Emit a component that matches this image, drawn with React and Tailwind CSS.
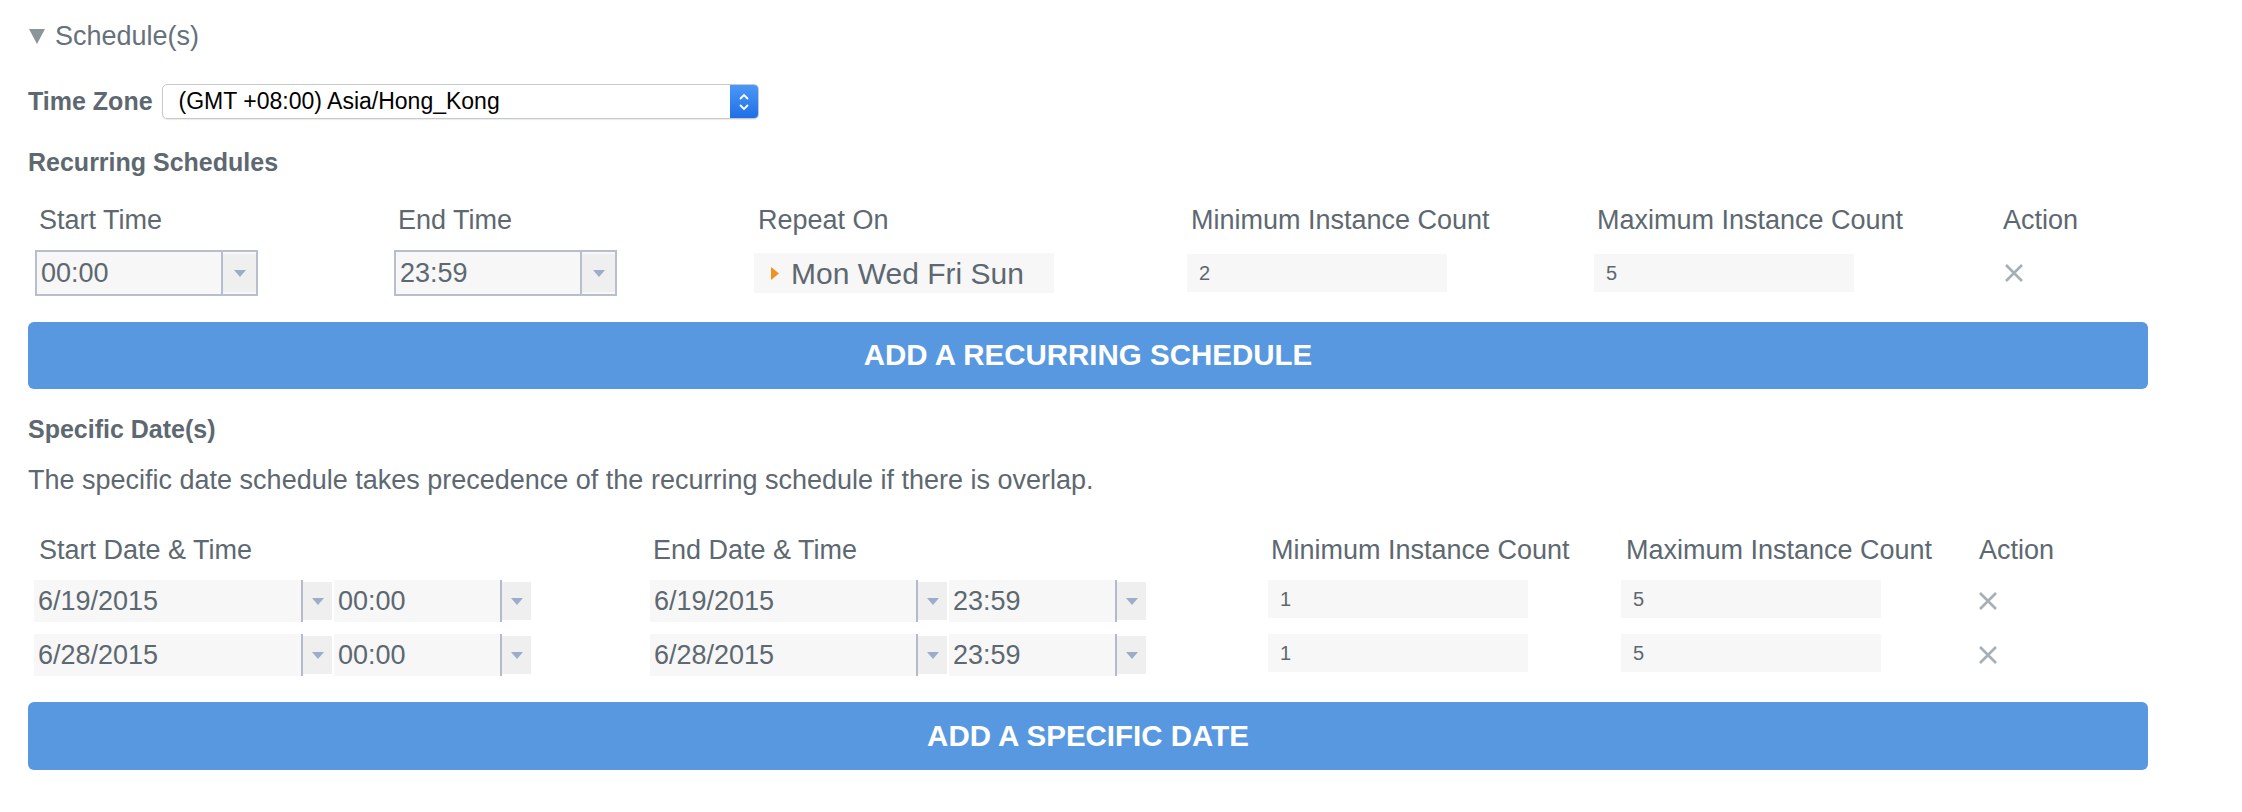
import React from "react";

const DownTri = () => (
  <svg width="12" height="7" viewBox="0 0 12 7">
    <path d="M0 0h12L6 7z" fill="#9cadc9" />
  </svg>
);

const XIcon = () => (
  <svg width="20" height="20" viewBox="0 0 20 20">
    <path d="M2 2l16 16M18 2L2 18" stroke="#a7afb6" strokeWidth="2.6" />
  </svg>
);

// bordered time select used in the recurring row
const TimeSelect = ({ value }) => (
  <div className="flex h-[46px] w-[223px] border-2 border-[#b7bfcf] bg-[#f7f7f7]">
    <div className="flex flex-1 items-center pl-[4px] text-[27px] text-[#5d6870]">{value}</div>
    <div className="w-[2px] bg-[#b7bfcf]" />
    <div className="mt-[2px] mb-[2px] flex w-[33px] items-center justify-center bg-[#efefef]">
      <DownTri />
    </div>
  </div>
);

// borderless field + dropdown used in the specific date rows
const Field = ({ value, width }) => (
  <div className="flex h-[42px]">
    <div className={`flex items-center bg-[#f7f7f7] pl-[4px] text-[27px] text-[#5d6870] ${width}`}>{value}</div>
    <div className="w-[2px] bg-[#b3bbcb]" />
    <div className="my-[2px] flex w-[29px] items-center justify-center bg-[#efefef]">
      <DownTri />
    </div>
  </div>
);

const NumBox = ({ value, width }) => (
  <div className={`flex h-[38px] items-center bg-[#f7f7f7] pl-[12px] text-[20px] text-[#5d6870] ${width}`}>
    {value}
  </div>
);

const specificRows = [
  { sd: "6/19/2015", st: "00:00", ed: "6/19/2015", et: "23:59", min: "1", max: "5" },
  { sd: "6/28/2015", st: "00:00", ed: "6/28/2015", et: "23:59", min: "1", max: "5" },
];

export default function App() {
  return (
    <div className="h-[812px] w-full bg-white font-['Liberation_Sans',Arial,sans-serif] text-[#5d6870]">
      <div className="pl-[28px] pr-[94px]">
        {/* section title */}
        <div className="flex h-[72px] items-center">
          <svg width="16" height="15" viewBox="0 0 16 15" className="ml-[1px]">
            <path d="M0 0h16L8 15z" fill="#8b959c" />
          </svg>
          <span className="ml-[10px] text-[27px] text-[#66717a]">Schedule(s)</span>
        </div>

        {/* time zone */}
        <div className="mt-[12px] flex h-[35px] items-center">
          <span className="text-[25px] font-bold">Time Zone</span>
          <div className="ml-[9px] flex h-[35px] w-[597px] overflow-hidden rounded-[5px] border border-[#c9c9c9] bg-white shadow-[0_1px_1px_rgba(0,0,0,0.08)]">
            <div className="flex flex-1 items-center pl-[16px] text-[23px] text-black">(GMT +08:00) Asia/Hong_Kong</div>
            <div className="flex w-[28px] items-center justify-center bg-gradient-to-b from-[#4b97f7] to-[#1f6fe6]">
              <svg width="12" height="20" viewBox="0 0 12 20">
                <path d="M2 7l4-4 4 4M2 13l4 4 4-4" stroke="white" strokeWidth="1.8" fill="none" />
              </svg>
            </div>
          </div>
        </div>

        {/* recurring */}
        <div className="mt-[29px] flex h-[30px] items-center text-[25px] font-bold">Recurring Schedules</div>

        <div className="ml-[7px] grid grid-cols-[359px_360px_433px_407px_406px_1fr]">
          <div className="mt-[25px] flex h-[34px] items-center pl-[4px] text-[27px]">Start Time</div>
          <div className="mt-[25px] flex h-[34px] items-center pl-[4px] text-[27px]">End Time</div>
          <div className="mt-[25px] flex h-[34px] items-center pl-[4px] text-[27px]">Repeat On</div>
          <div className="mt-[25px] flex h-[34px] items-center pl-[4px] text-[27px]">Minimum Instance Count</div>
          <div className="mt-[25px] flex h-[34px] items-center pl-[3px] text-[27px]">Maximum Instance Count</div>
          <div className="mt-[25px] flex h-[34px] items-center pl-[3px] text-[27px]">Action</div>

          <div className="mt-[13px] flex h-[46px] items-center">
            <TimeSelect value="00:00" />
          </div>
          <div className="mt-[13px] flex h-[46px] items-center">
            <TimeSelect value="23:59" />
          </div>
          <div className="mt-[13px] flex h-[46px] items-center">
            <div className="flex h-[40px] w-[300px] items-center bg-[#f7f7f7] pl-[17px]">
              <svg width="8" height="13" viewBox="0 0 8 13">
                <path d="M0 0l8 6.5L0 13z" fill="#f0931c" />
              </svg>
              <span className="ml-[12px] text-[30px]">Mon Wed Fri Sun</span>
            </div>
          </div>
          <div className="mt-[13px] flex h-[46px] items-center">
            <NumBox value="2" width="w-[260px]" />
          </div>
          <div className="mt-[13px] flex h-[46px] items-center">
            <NumBox value="5" width="w-[260px]" />
          </div>
          <div className="mt-[13px] flex h-[46px] items-center pl-[4px]">
            <XIcon />
          </div>
        </div>

        <button className="mt-[26px] flex h-[67px] w-full items-center justify-center rounded-[6px] bg-[#5898e0] text-[29.5px] font-bold text-white">
          ADD A RECURRING SCHEDULE
        </button>

        {/* specific dates */}
        <div className="mt-[26px] flex h-[30px] items-center text-[25px] font-bold">Specific Date(s)</div>
        <div className="mt-[18px] flex h-[34px] items-center text-[27px]">
          The specific date schedule takes precedence of the recurring schedule if there is overlap.
        </div>

        <div className="ml-[6px] grid grid-cols-[616px_618px_353px_357px_1fr]">
          <div className="mt-[36px] flex h-[34px] items-center pl-[5px] text-[27px]">Start Date &amp; Time</div>
          <div className="mt-[36px] flex h-[34px] items-center pl-[3px] text-[27px]">End Date &amp; Time</div>
          <div className="mt-[36px] flex h-[34px] items-center pl-[3px] text-[27px]">Minimum Instance Count</div>
          <div className="mt-[36px] flex h-[34px] items-center pl-[5px] text-[27px]">Maximum Instance Count</div>
          <div className="mt-[36px] flex h-[34px] items-center pl-[1px] text-[27px]">Action</div>

          {specificRows.map((r, i) => (
            <React.Fragment key={i}>
              <div className={`${i === 0 ? "mt-[13px]" : "mt-[12px]"} flex h-[42px] items-center gap-[2px]`}>
                <Field value={r.sd} width="w-[267px]" />
                <Field value={r.st} width="w-[166px]" />
              </div>
              <div className={`${i === 0 ? "mt-[13px]" : "mt-[12px]"} flex h-[42px] items-center gap-[2px]`}>
                <Field value={r.ed} width="w-[266px]" />
                <Field value={r.et} width="w-[166px]" />
              </div>
              <div className={`${i === 0 ? "mt-[13px]" : "mt-[12px]"} flex h-[42px] items-start`}>
                <NumBox value={r.min} width="w-[260px]" />
              </div>
              <div className={`${i === 0 ? "mt-[13px]" : "mt-[12px]"} flex h-[42px] items-start`}>
                <NumBox value={r.max} width="w-[260px]" />
              </div>
              <div className={`${i === 0 ? "mt-[13px]" : "mt-[12px]"} flex h-[42px] items-center`}>
                <XIcon />
              </div>
            </React.Fragment>
          ))}
        </div>

        <button className="mt-[26px] flex h-[68px] w-full items-center justify-center rounded-[6px] bg-[#5898e0] text-[29.5px] font-bold text-white">
          ADD A SPECIFIC DATE
        </button>
      </div>
    </div>
  );
}
